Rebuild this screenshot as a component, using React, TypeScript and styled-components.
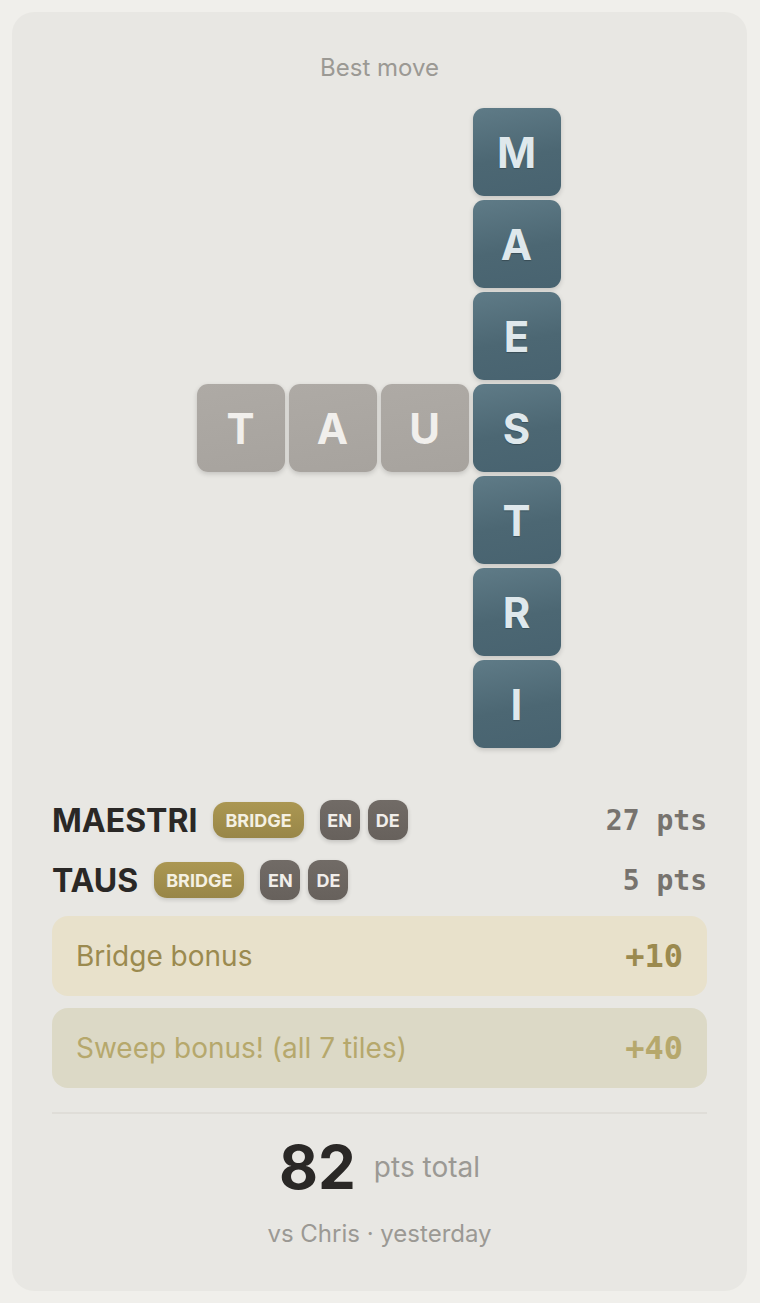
import { ReactElement } from 'react';
import styled, { createGlobalStyle } from 'styled-components';

const GlobalStyle = createGlobalStyle`
  html, body {
    margin: 0;
    padding: 0;
    background: #f0efeb;
  }
  body {
    font-family: Inter, "Noto Sans", sans-serif;
  }
`;

const Page = styled.div`
  padding: 12px 13px 14px 12px;
`;

const Card = styled.div`
  background: #e8e7e3;
  border-radius: 22px;
  padding: 41px 40px 43px;
  display: flex;
  flex-direction: column;
`;

const Label = styled.div`
  text-align: center;
  font-size: 24px;
  line-height: 30px;
  color: #9b9994;
`;

const Board = styled.div`
  margin: 25px auto 0;
  transform: translateX(-1px);
  display: grid;
  grid-template-columns: repeat(4, 88px);
  grid-template-rows: repeat(7, 88px);
  gap: 4px;
`;

const Tile = styled.div<{ $col: number; $row: number; $muted?: boolean }>`
  grid-column: ${(p) => p.$col};
  grid-row: ${(p) => p.$row};
  border-radius: 11px;
  display: flex;
  align-items: center;
  justify-content: center;
  font-size: 42px;
  font-weight: 700;
  background: ${(p) => (p.$muted
    ? 'linear-gradient(170deg, #aeaaa5 0%, #a7a39e 100%)'
    : 'linear-gradient(170deg, #5f7b87 0%, #4c6773 55%, #486370 100%)')};
  color: ${(p) => (p.$muted ? '#f1efec' : '#dfe8ec')};
  box-shadow: 0 2px 5px rgba(0, 0, 0, 0.16);
  text-shadow: ${(p) => (p.$muted ? 'none' : '0 1px 1px rgba(0, 0, 0, 0.25)')};
`;

const Words = styled.div`
  margin-top: 52px;
  display: flex;
  flex-direction: column;
  gap: 20px;
`;

const WordRow = styled.div`
  display: flex;
  align-items: center;
  height: 40px;
`;

const Word = styled.span`
  font-size: 32px;
  font-weight: 700;
  color: #2a2826;
  margin-right: 16px;
`;

const BridgeBadge = styled.span`
  height: 36px;
  padding: 0 12px;
  border-radius: 13px;
  display: flex;
  align-items: center;
  background: linear-gradient(180deg, #ab9752 0%, #988648 100%);
  color: #f4f0e2;
  font-size: 18px;
  font-weight: 700;
  box-shadow: 0 2px 4px rgba(0, 0, 0, 0.14);
  margin-right: 16px;
`;

const LangBadge = styled.span`
  width: 40px;
  height: 40px;
  border-radius: 12px;
  display: flex;
  align-items: center;
  justify-content: center;
  background: linear-gradient(180deg, #716b66 0%, #67615c 100%);
  color: #f1eeea;
  font-size: 18px;
  font-weight: 700;
  box-shadow: 0 2px 4px rgba(0, 0, 0, 0.16);
  margin-right: 8px;
`;

const Points = styled.span`
  margin-left: auto;
  font-family: "DejaVu Sans Mono", "Liberation Mono", monospace;
  font-size: 28px;
  font-weight: 700;
  color: #77736e;
`;

const Bonuses = styled.div`
  margin-top: 16px;
  display: flex;
  flex-direction: column;
  gap: 12px;
`;

const Bonus = styled.div<{ $faded?: boolean }>`
  height: 80px;
  border-radius: 16px;
  padding: 0 24px;
  display: flex;
  align-items: center;
  justify-content: space-between;
  background: ${(p) => (p.$faded ? '#dcd9c6' : '#e8e1cb')};
  color: ${(p) => (p.$faded ? '#b6a86c' : '#9b8a4f')};
`;

const BonusText = styled.span`
  font-size: 28px;
`;

const BonusValue = styled.span`
  font-family: "DejaVu Sans Mono", "Liberation Mono", monospace;
  font-size: 32px;
  font-weight: 700;
`;

const Divider = styled.div`
  margin-top: 24px;
  height: 2px;
  background: #dfddd8;
`;

const Total = styled.div`
  margin-top: 17px;
  display: flex;
  justify-content: center;
  align-items: center;
  gap: 18px;
`;

const TotalNumber = styled.span`
  font-size: 60px;
  font-weight: 700;
  color: #2a2826;
  line-height: 72px;
`;

const TotalLabel = styled.span`
  font-size: 28px;
  color: #9b9994;
`;

const Meta = styled.div`
  margin-top: 16px;
  text-align: center;
  font-size: 24px;
  color: #9b9994;
`;

const down = 'MAESTRI'.split('');
const across = 'TAU'.split('');

const words = [
  { word: 'MAESTRI', pts: 27 },
  { word: 'TAUS', pts: 5 }
];

const App = (): ReactElement => (
  <Page>
    <GlobalStyle />
    <Card>
      <Label>Best move</Label>
      <Board>
        {down.map((ch, i) => (
          <Tile key={`d${i}`} $col={4} $row={i + 1}>{ch}</Tile>
        ))}
        {across.map((ch, i) => (
          <Tile key={`a${i}`} $col={i + 1} $row={4} $muted>{ch}</Tile>
        ))}
      </Board>
      <Words>
        {words.map((w) => (
          <WordRow key={w.word}>
            <Word>{w.word}</Word>
            <BridgeBadge>BRIDGE</BridgeBadge>
            <LangBadge>EN</LangBadge>
            <LangBadge>DE</LangBadge>
            <Points>{w.pts} pts</Points>
          </WordRow>
        ))}
      </Words>
      <Bonuses>
        <Bonus>
          <BonusText>Bridge bonus</BonusText>
          <BonusValue>+10</BonusValue>
        </Bonus>
        <Bonus $faded>
          <BonusText>Sweep bonus! (all 7 tiles)</BonusText>
          <BonusValue>+40</BonusValue>
        </Bonus>
      </Bonuses>
      <Divider />
      <Total>
        <TotalNumber>82</TotalNumber>
        <TotalLabel>pts total</TotalLabel>
      </Total>
      <Meta>vs Chris · yesterday</Meta>
    </Card>
  </Page>
);

export default App;
